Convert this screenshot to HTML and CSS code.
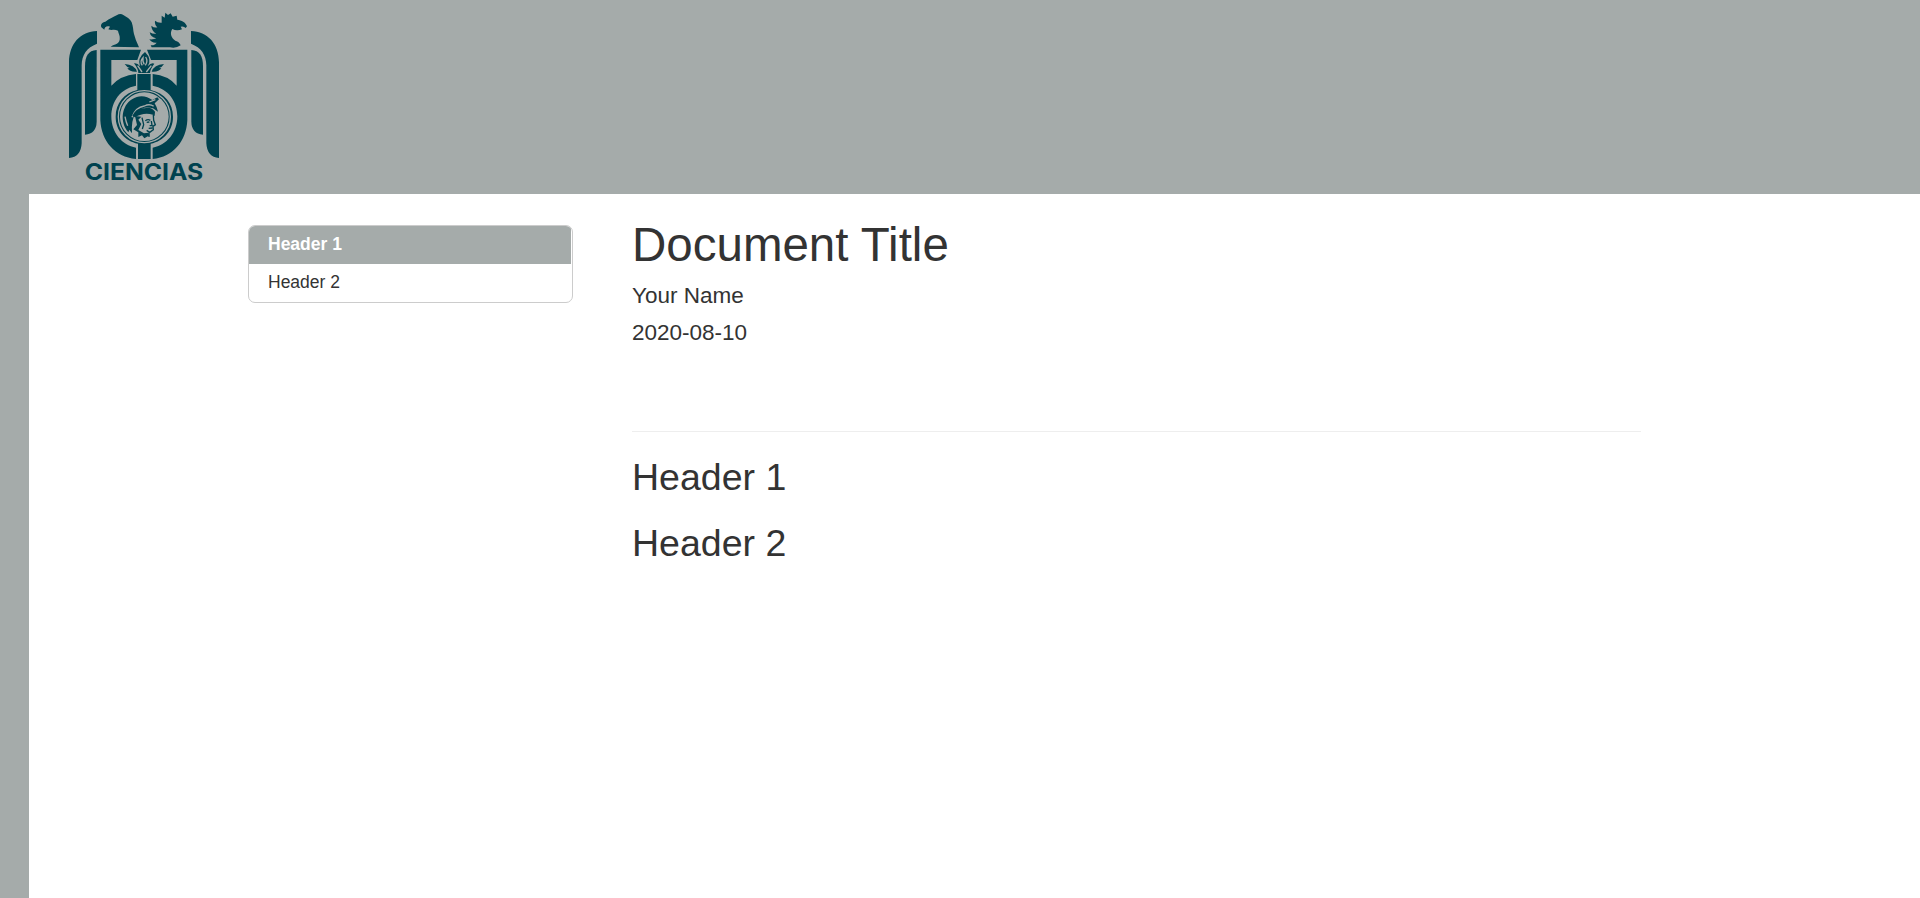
FILE: index.html
```
<!DOCTYPE html>
<html lang="en">
<head>
<meta charset="utf-8">
<title>Document Title</title>
<link rel="stylesheet" href="styles.css">
</head>
<body>
<header class="banner">
<svg class="crest" viewBox="0 0 510 582" role="img" aria-label="Ciencias">
  <!-- eagle heads -->
  <path d="M152 140C160 133 177 133 179 119C181 105 175 101 174 92C164 87 154 92 145 88L150 80C140 76 133 82 133 89L124 82C121 73 126 67 136 65C149 56 160 51 170 46Q181 38 190 45C199 50 211 57 215 67C220 80 219 91 222 102Q226 119 237 142Z"/>
  <path d="M272 136C284 136 286 132 290 128Q276 130 268 118Q282 119 289 115Q272 112 269 97Q280 103 289 101Q274 92 274 77Q283 85 292 82Q283 73 285 62Q293 69 305 68V47L314 53L316 38L324 45L332 40L338 50L350 47L352 59C364 61 377 66 381 79L377 84Q372 78 362 80L366 88Q350 94 337 87C329 99 333 113 346 122Q359 126 362 136Q348 146 330 142H275Z"/>
  <!-- wings -->
  <path d="M111 93V131C80 143 66 164 65 196V430Q63 471 27 474V187C28 130 61 95 111 93Z"/>
  <path d="M393 93V131C424 143 438 164 439 196V430Q441 471 477 474V187C476 130 443 95 393 93Z"/>
  <path d="M110 150V365Q109 401 75 404V199C75 169 85 151 110 150Z"/>
  <path d="M394 150V365Q395 401 429 404V199C429 169 419 151 394 150Z"/>
  <!-- shield -->
  <path d="M121 149H243L232 180H154V257Q182 226 228 222V257C181 266 154 304 154 349C154 399 186 435 228 443V477C164 471 124 423 121 361Z"/>
  <path d="M261 149H382V361C379 423 340 471 278 477V443C320 435 352 399 352 349C352 304 325 266 278 257V222Q324 226 350 257V180H273Z"/>
  <path d="M232 222H272V270C314 279 339 310 339 350C339 390 312 423 272 431V477H234V431C194 423 167 390 167 350C167 310 192 279 232 270Z"/>
  <circle class="ground" cx="253" cy="350" r="73"/>
  <circle class="ring" cx="253" cy="350" r="78"/>
  <!-- flame and leaves -->
  <path d="M235 219Q235 207 222 190Q232 188 240 199Q231 174 255 156Q277 177 263 199Q274 187 283 191Q271 206 270 219Z"/>
  <path d="M194 192Q224 194 231 215Q210 217 202 205L209 204Q200 201 194 192ZM312 192Q282 194 275 215Q296 217 304 205L297 204Q307 201 312 192Z"/>
  <path class="cut" d="M247 196Q238 184 249 173Q247 186 253 193M256 196Q265 183 257 171M233 197L246 216M274 197L259 216"/>
  <!-- helmeted profile -->
  <path d="M205 397C178 366 185 317 216 298C237 284 259 287 277 300L292 292L297 298L284 310Q292 323 294 335L279 325Q250 315 226 340Q213 363 216 400L208 389Z"/>
  <path class="cut" d="M216 352Q226 322 253 318Q269 310 281 319M268 306L286 299M195 350Q198 366 203 377"/>
  <path d="M217 347Q229 323 253 325Q273 318 285 335L284 348L279 344Q250 336 225 352Z"/>
  <path d="M225 348L244 350L235 359L244 372L235 390L252 400L265 398L269 406L253 415L246 406L235 411V397L220 388L231 375Z"/>
  <path class="stroke" d="M280 344L281 361L286 374L279 379L280 389L269 397L260 391M256 362Q264 356 271 361M260 367L268 366M274 363L276 376L269 377M266 385L277 384M246 353L251 374L247 387M267 398V411"/>
  <text class="wordmark" x="74" y="541" textLength="356" lengthAdjust="spacingAndGlyphs">CIENCIAS</text>
</svg>
</header>
<div class="page">
  <nav class="toc">
    <a class="toc-item active">Header 1</a>
    <a class="toc-item">Header 2</a>
  </nav>
  <main class="content">
    <div class="document-header">
      <h1>Document Title</h1>
      <h4>Your Name</h4>
      <h4>2020-08-10</h4>
    </div>
    <h2>Header 1</h2>
    <h2>Header 2</h2>
  </main>
</div>
</body>
</html>
```
FILE: styles.css
```
* { box-sizing: border-box; }
body {
  margin: 0;
  min-height: 898px;
  background: #fff;
  color: #333;
  font-family: "Liberation Sans", Arial, sans-serif;
  font-size: 17.5px;
}
.banner {
  height: 194px;
  padding-left: 60px;
  background: #a5abaa;
}
.crest {
  display: block;
  width: 170px;
  height: 194px;
  fill: #00424f;
}
.crest .ground { fill: #a5abaa; }
.crest .ring { fill: none; stroke: #a5abaa; stroke-width: 4; }
.crest .cut { fill: none; stroke: #a5abaa; stroke-width: 4; }
.crest .stroke { fill: none; stroke: #00424f; stroke-width: 4; }
.wordmark {
  font-family: Inter, sans-serif;
  font-size: 68px;
  font-weight: 700;
}
.page {
  display: flex;
  align-items: flex-start;
  gap: 59px;
  min-height: 704px;
  padding: 25px 279px 0 219px;
  border-left: 29px solid #a5abaa;
}
.toc {
  width: 325px;
  margin-top: 6px;
  border: 1px solid #ccc;
  border-radius: 7px;
  overflow: hidden;
}
.toc-item {
  display: block;
  height: 38px;
  padding-left: 19px;
  line-height: 37px;
}
.toc-item.active {
  height: 38px;
  margin-right: 1px;
  background: #a5abaa;
  color: #fff;
  font-weight: 700;
}
.content { flex: 1; }
h1, h2, h4 {
  margin: 0;
  font-weight: 400;
  line-height: 1.1;
}
h1 { font-size: 47.5px; }
h4 { margin-top: 12.5px; font-size: 22.5px; }
h2 { margin-top: 25px; font-size: 37.5px; }
.document-header {
  height: 213px;
  border-bottom: 1px solid #eee;
}
```
